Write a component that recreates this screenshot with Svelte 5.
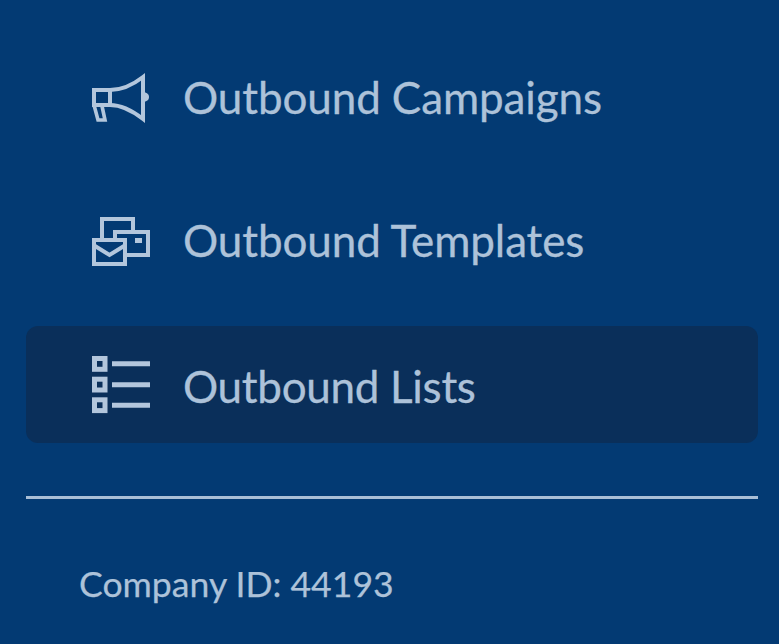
<script>
  const items = [
    { label: "Outbound Campaigns", icon: "megaphone" },
    { label: "Outbound Templates", icon: "templates" },
    { label: "Outbound Lists", icon: "lists", active: true }
  ];
</script>

<nav class="sidebar">
  <ul class="menu">
    {#each items as item}
      <li class="item" class:active={item.active}>
        <svg class="icon" viewBox="0 0 61 61" aria-hidden="true">
          {#if item.icon === "megaphone"}
            <g fill="none" stroke="currentColor" stroke-width="4">
              <path d="M4 37V22H20V37Z" />
              <path d="M20 22C32 22 44 16 53 9V51C44 44 32 37 20 37" />
              <path d="M4 37L8 52H15L12 38" stroke-width="3.600" />
            </g>
            <path d="M54 24C58 25 59 27 59 29C59 31 58 33 54 34Z" fill="currentColor" />
          {:else if item.icon === "templates"}
            <g fill="none" stroke="currentColor" stroke-width="4">
              <path d="M12 27V8H43V20" />
              <path d="M25 27V21H58V44H37" />
              <path d="M4 29H35V53H4Z" />
              <path d="M5 35L19.500 44L34 35" />
            </g>
            <rect x="45" y="27" width="7" height="5" fill="currentColor" />
          {:else}
            <g fill="none" stroke="currentColor" stroke-width="5">
              <rect x="4.500" y="4.500" width="10.500" height="10.800" />
              <rect x="4.500" y="25.200" width="10.500" height="10.800" />
              <rect x="4.500" y="45.800" width="10.500" height="10.800" />
              <path d="M22 9.700H60M22 30.700H60M22 51.200H60" />
            </g>
          {/if}
        </svg>
        <span class="label">{item.label}</span>
      </li>
    {/each}
  </ul>
  <hr class="divider" />
  <div class="company">Company ID: 44193</div>
</nav>

<style>
  :global(body) {
    margin: 0;
    background-color: #033a73;
    overflow: hidden;
  }

  .sidebar {
    height: 644px;
    box-sizing: border-box;
    padding: 40px 21px 0 26px;
    font-family: Lato, "Noto Sans", sans-serif;
    color: #b3c6dc;
  }

  .menu {
    list-style: none;
    margin: 0;
    padding: 0;
    display: flex;
    flex-direction: column;
    gap: 26px;
  }

  .item {
    height: 117px;
    display: flex;
    align-items: center;
    padding-left: 64px;
    gap: 32px;
    border-radius: 12px;
  }

  .item.active {
    background-color: #0a2f5a;
  }

  .icon {
    width: 61px;
    height: 61px;
    flex: none;
  }

  .label {
    font-size: 44px;
    line-height: 1;
    padding-bottom: 4px;
    letter-spacing: -0.1px;
    color: #adc2d9;
    -webkit-text-stroke: 0.3px currentColor;
  }

  .active .label {
    padding-bottom: 0;
    padding-top: 2px;
    letter-spacing: -0.3px;
  }

  .divider {
    margin: 53px 0 0;
    height: 3px;
    border: none;
    background-color: #a9bed6;
  }

  .company {
    margin: 63px 0 0 53px;
    font-size: 35.600px;
    line-height: 44px;
    color: #adc2d9;
    -webkit-text-stroke: 0.25px currentColor;
  }
</style>
